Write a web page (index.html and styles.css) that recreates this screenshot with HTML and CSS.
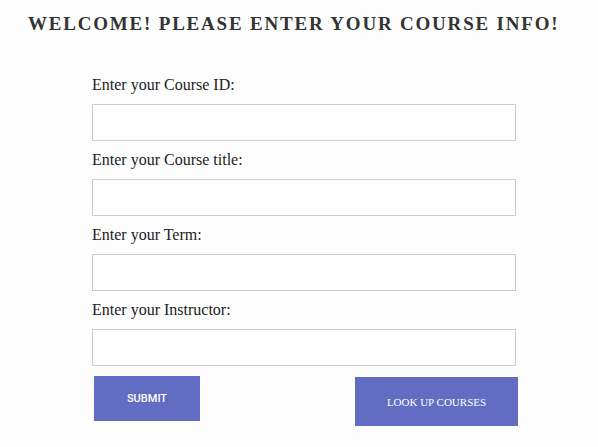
FILE: index.html
```html
<!DOCTYPE html>
<html>
<head>
<meta charset="utf-8">
<link rel="stylesheet" href="styles.css">
</head>
<body>
<h1 class="title">Welcome! Please enter your course info!</h1>
<form class="course-form">
  <label class="field-label" for="cid">Enter your Course ID:</label>
  <input class="field-input" id="cid" type="text">
  <label class="field-label" for="ctitle">Enter your Course title:</label>
  <input class="field-input" id="ctitle" type="text">
  <label class="field-label" for="term">Enter your Term:</label>
  <input class="field-input" id="term" type="text">
  <label class="field-label" for="instr">Enter your Instructor:</label>
  <input class="field-input" id="instr" type="text">
  <div class="actions">
    <button class="btn btn-submit" type="button">SUBMIT</button>
    <button class="btn btn-lookup" type="button">LOOK UP COURSES</button>
  </div>
</form>
</body>
</html>
```
FILE: styles.css
```css
html, body {
  margin: 0;
  padding: 0;
  background: #fdfdfd;
}
body {
  font-family: "Liberation Serif", "Times New Roman", serif;
  color: #222;
}
.title {
  margin: 13px 0 0 28px;
  font-size: 19px;
  line-height: 22px;
  font-weight: bold;
  text-transform: uppercase;
  letter-spacing: 1.8px;
  color: #333;
  white-space: nowrap;
}
.course-form {
  display: flex;
  flex-direction: column;
  width: 424px;
  margin: 41px 0 0 92px;
}
.field-label {
  font-size: 16px;
  line-height: 18px;
  margin-bottom: 10px;
  color: #222;
}
.field-input {
  box-sizing: border-box;
  height: 37px;
  width: 424px;
  margin: 0 0 10px 0;
  border: 1px solid #cccccc;
  background: #fff;
  padding: 0 8px;
  outline: none;
}
.actions {
  display: flex;
  justify-content: space-between;
  align-items: flex-start;
  width: 426px;
}
.btn {
  border: none;
  background: #606dc2;
  color: #fff;
  padding: 0;
  cursor: pointer;
}
.btn-submit {
  margin-left: 2px;
  width: 106px;
  height: 45px;
  font-family: Roboto, "Liberation Sans", sans-serif;
  font-size: 11px;
  font-weight: 500;
}
.btn-lookup {
  margin-top: 1px;
  width: 163px;
  height: 49px;
  font-family: "Liberation Serif", "Times New Roman", serif;
  font-size: 11px;
}
```
